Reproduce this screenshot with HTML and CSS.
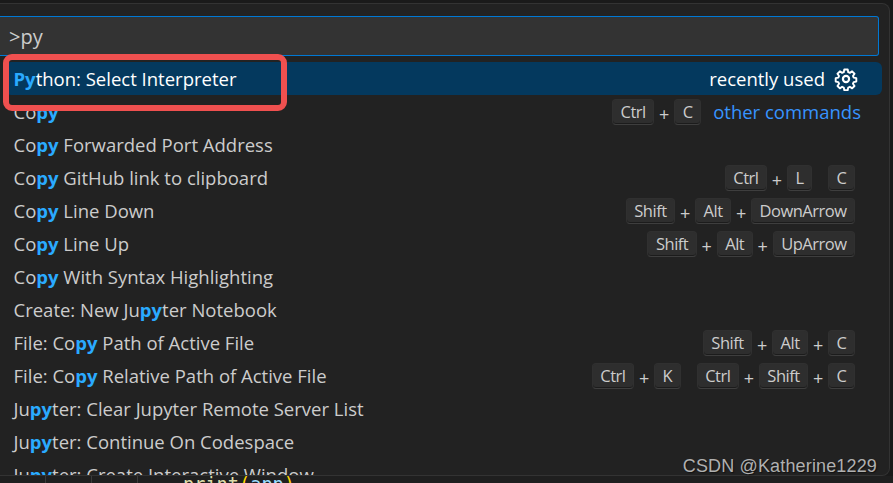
FILE: index.html
```html
<!DOCTYPE html>
<html lang="en">
<head>
<meta charset="utf-8">
<title>Command Palette</title>
<link rel="stylesheet" href="styles.css">
</head>
<body>
<div class="app">
  <div class="palette">
    <div class="input">&gt;py</div>
    <ul class="list">
      <li class="row selected">
        <span class="label"><b>Py</b>thon: Select Interpreter</span>
        <span class="tag">recently used</span>
        <svg class="gear" viewBox="0 0 24 24" width="24" height="24" fill="none" stroke="#fff" stroke-width="2.2" stroke-linejoin="round"><path d="M10 1.5h4l.6 3.1 1.9.8 2.6-1.8 2.8 2.8-1.8 2.6.8 1.9 3.1.6v4l-3.1.6-.8 1.9 1.8 2.6-2.8 2.8-2.6-1.8-1.9.8-.6 3.1h-4l-.6-3.1-1.9-.8-2.6 1.8-2.8-2.8 1.8-2.6-.8-1.9-3.1-.6v-4l3.1-.6.8-1.9-1.8-2.6 2.8-2.8 2.6 1.8 1.9-.8z" transform="translate(12 12) scale(.86) translate(-12 -12.5)"/><circle cx="12" cy="12" r="3.1"/></svg>
      </li>
      <li class="row">
        <span class="label">Co<b>py</b></span>
        <span class="keys"><kbd>Ctrl</kbd><i>+</i><kbd>C</kbd></span>
        <span class="other">other commands</span>
      </li>
      <li class="row"><span class="label">Co<b>py</b> Forwarded Port Address</span></li>
      <li class="row">
        <span class="label">Co<b>py</b> GitHub link to clipboard</span>
        <span class="keys"><kbd>Ctrl</kbd><i>+</i><kbd>L</kbd><kbd class="chord">C</kbd></span>
      </li>
      <li class="row">
        <span class="label">Co<b>py</b> Line Down</span>
        <span class="keys"><kbd>Shift</kbd><i>+</i><kbd>Alt</kbd><i>+</i><kbd>DownArrow</kbd></span>
      </li>
      <li class="row">
        <span class="label">Co<b>py</b> Line Up</span>
        <span class="keys"><kbd>Shift</kbd><i>+</i><kbd>Alt</kbd><i>+</i><kbd>UpArrow</kbd></span>
      </li>
      <li class="row"><span class="label">Co<b>py</b> With Syntax Highlighting</span></li>
      <li class="row"><span class="label">Create: New Ju<b>py</b>ter Notebook</span></li>
      <li class="row">
        <span class="label">File: Co<b>py</b> Path of Active File</span>
        <span class="keys"><kbd>Shift</kbd><i>+</i><kbd>Alt</kbd><i>+</i><kbd>C</kbd></span>
      </li>
      <li class="row">
        <span class="label">File: Co<b>py</b> Relative Path of Active File</span>
        <span class="keys"><kbd>Ctrl</kbd><i>+</i><kbd>K</kbd><kbd class="chord">Ctrl</kbd><i>+</i><kbd>Shift</kbd><i>+</i><kbd>C</kbd></span>
      </li>
      <li class="row"><span class="label">Ju<b>py</b>ter: Clear Jupyter Remote Server List</span></li>
      <li class="row"><span class="label">Ju<b>py</b>ter: Continue On Codespace</span></li>
      <li class="row"><span class="label">Ju<b>py</b>ter: Create Interactive Window</span></li>
    </ul>
  </div>
  <div class="editor">
    <span class="gutter"></span><span class="gutter"></span><span class="gutter"></span>
    <code class="code"><span class="fn">print</span><span class="paren">(</span><span class="var">app</span><span class="paren">)</span></code>
  </div>
  <div class="callout"></div>
  <div class="watermark">CSDN @Katherine1229</div>
</div>
</body>
</html>
```

FILE: styles.css
```css
* { box-sizing: border-box; }
html, body { margin: 0; padding: 0; }
body { width: 893px; height: 483px; overflow: hidden; background: #1a1a1a; }
.app {
  position: relative;
  width: 893px;
  height: 483px;
  padding-top: 3px;
  font-family: "Open Sans", "Noto Sans", sans-serif;
  display: flex;
  flex-direction: column;
}
.palette {
  height: 473px;
  width: 890px;
  flex: none;
  background: #222222;
  border: 1px solid #333333;
  border-left: 0;
  border-top-right-radius: 8px;
  border-bottom-right-radius: 8px;
  padding-top: 12px;
  overflow: hidden;
}
.input {
  width: 879px;
  height: 40px;
  background: #333333;
  border: 1px solid #0078d4;
  border-left: 0;
  border-radius: 0 3px 3px 0;
  padding-left: 9px;
  color: #cccccc;
  font-size: 20px;
  line-height: 40px;
}
.list { list-style: none; margin: 6px 0 0; padding: 0 7px 0 5px; }
.row {
  display: flex;
  align-items: center;
  height: 33px;
  padding: 0 7px 0 8.5px;
  border-radius: 6px;
  color: #cccccc;
  font-size: 18.5px;
  white-space: nowrap;
}
.row b { color: #2aaaff; font-weight: 700; }
.label { flex: 1; }
.selected { background: #04395e; color: #ffffff; padding-right: 24px; }
.tag { margin-right: 9px; }
.gear { display: block; }
.keys { display: flex; align-items: center; padding-right: 20px; margin-top: 1px; font-size: 16.5px; letter-spacing: -0.5px; }
.keys i { font-style: normal; width: 20px; text-align: center; font-size: 18px; padding-top: 3px; letter-spacing: 0; }
kbd {
  display: block;
  height: 26px;
  padding: 0 7.5px;
  border-radius: 4px;
  background: #2e2e2e;
  border: 1px solid #303030;
  border-bottom-color: #3e3e3e;
  box-shadow: inset 0 -1px 0 #1c1c1c;
  color: #cccccc;
  font: inherit;
  line-height: 24px;
}
.chord { margin-left: 16px; }
.other { color: #3794ff; margin-left: -8px; margin-right: 14px; }
.editor {
  flex: 1;
  display: flex;
  align-items: flex-start;
  height: 7px;
  overflow: hidden;
  background: #1f1f1f;
  padding-left: 45px;
}
.gutter { width: 46px; height: 8px; flex: none; border-left: 1px solid #3a3a3a; }
.code { font-family: "DejaVu Sans Mono", monospace; font-size: 18.6px; line-height: 20px; margin-top: -1px; }
.fn { color: #dcdcaa; }
.paren { color: #ffd700; }
.var { color: #9cdcfe; }
.callout {
  position: absolute;
  left: 3px;
  top: 54px;
  width: 284px;
  height: 57px;
  border: 6px solid #f0504f;
  border-radius: 9px;
}
.watermark {
  position: absolute;
  right: 16px;
  top: 456px;
  color: #b0b0b0;
  font: 18px "Liberation Sans", sans-serif;
  letter-spacing: 0.15px;
  text-shadow: 1px 1px 1px #111111;
}
```
